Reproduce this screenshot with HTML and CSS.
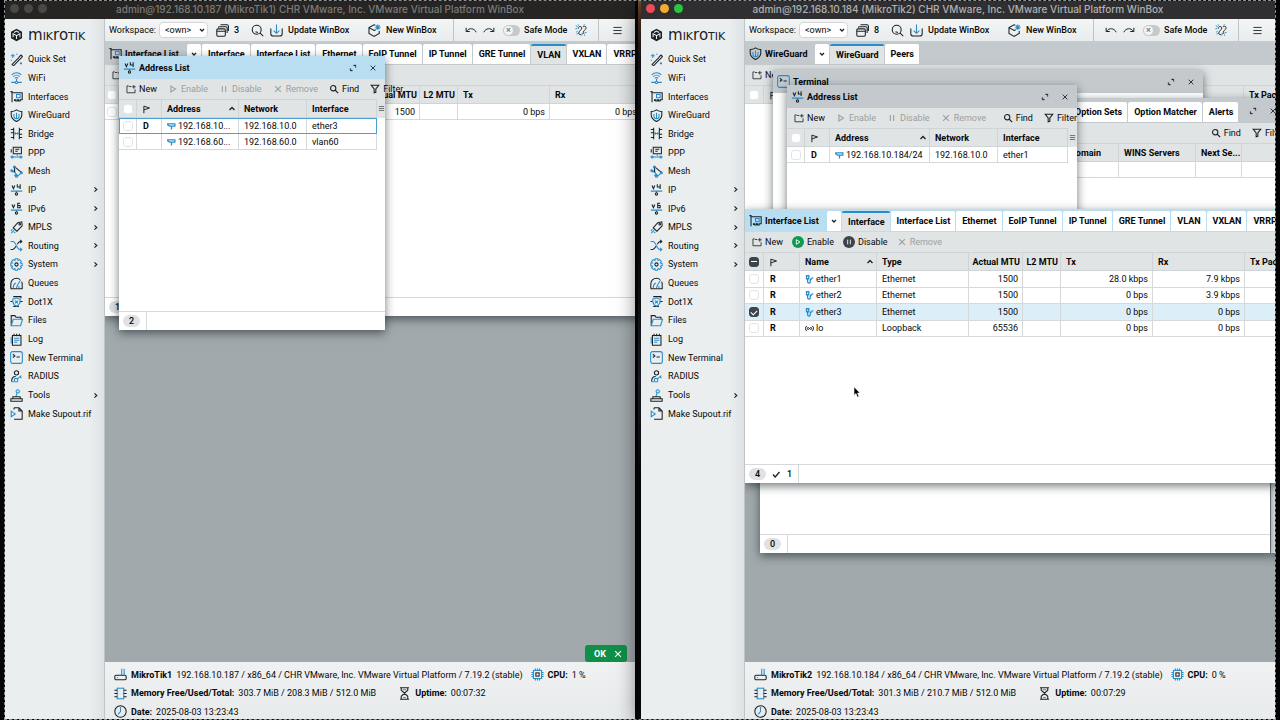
FILE: index.html
```html
<!DOCTYPE html>
<html lang="en">
<head>
<meta charset="utf-8">
<title>WinBox</title>
<link rel="stylesheet" href="styles.css">
</head>
<body>
<svg class="defs" aria-hidden="true">
  <symbol id="i-logo" viewBox="0 0 16 16"><path class="solid" d="M8 .3l6.8 3.8v7.8L8 15.7 1.200 11.900V4.100z"/><path class="cut" d="M3.800 10.800V6.300L8 8.800l4.200-2.500v4.500M5 4.900l3-1.700 3 1.700M8 9v4"/></symbol>
  <symbol id="i-wand" viewBox="0 0 16 16"><path class="d" d="M2 14.500l9.500-9.500M4.500 15.500L14.500 5.500M11 5l2.500-2.500 1.700 1.700-1 1.500M2 14l2.500 1.500"/><path class="b" d="M3.500 1v5M1 3.500h5M13.500 11.500v2.500M12.200 12.800h2.600M8.500 1v1.500M1 9h1.500"/></symbol>
  <symbol id="i-wifi" viewBox="0 0 16 16"><path class="b" d="M2 4.800c3.500-3.500 8.500-3.500 12 0M4 7c2.300-2.300 5.700-2.300 8 0M6 9c1.300-1.200 2.700-1.200 4 0M8 9.500V13M1.500 14h5M9.500 14h5"/><circle class="b" cx="8" cy="14" r="1.300"/></symbol>
  <symbol id="i-iface" viewBox="0 0 16 16"><path class="d" d="M.5 2h2v13M2.500 3.500h12.500v8.500h-2.500v1.500h-2V12h-1.500v1.500h-2V12H5.500v1.500"/><rect class="b" x="8" y="5.500" width="4.500" height="4"/></symbol>
  <symbol id="i-shield" viewBox="0 0 16 16"><path class="d" d="M8 1c2 1.500 4 2 6.500 2v4.500c0 4-2.500 6-6.500 8-4-2-6.500-4-6.500-8V3C4 3 6 2.500 8 1z"/><path class="b" d="M8 4.500v8M4.800 6v3c0 2 1.200 3 3.200 3s3.200-1 3.200-3V6"/></symbol>
  <symbol id="i-bridge" viewBox="0 0 16 16"><path class="d" d="M4.500 1v14M11.500 1v14M1 3h3.500M1 7h3.500M1 13h3.500M11.500 3H15M11.500 9H15M11.500 13H15"/><path class="b" d="M4.500 8h7M6.500 6.500v3M9.500 6.500v3"/></symbol>
  <symbol id="i-ppp" viewBox="0 0 16 16"><path class="d" d="M4 1.500h10v8H4zM6.500 4h5M6.500 6.500h3M1.500 4v4"/><path class="b" d="M9 9.500V12M3 13.500h10"/><circle class="b" cx="2.500" cy="13.500" r="1.300"/><circle class="b" cx="13.500" cy="13.500" r="1.300"/></symbol>
  <symbol id="i-mesh" viewBox="0 0 16 16"><path class="b" d="M1.500 6.500l4.500 2 3 5.500 5-4.500M1.500 6.500L4 9M6 8.500L5.500 3M9 14l-4-2"/><path class="d" d="M5.500 2l8.500 7M5.500 2v7"/><circle class="b" cx="5.500" cy="2.500" r="1.200"/><circle class="b" cx="14" cy="9.500" r="1.200"/><circle class="b" cx="8" cy="13.500" r="1.500"/><circle class="b" cx="2" cy="7" r="1"/></symbol>
  <symbol id="i-v4" viewBox="0 0 16 16"><path class="d" d="M2.500 3l1.700 4 1.700-4M9 1.500V5h4M12.500 1.500V7.500"/><path class="b" d="M1 10h14M8 10v2"/><circle class="d" cx="8" cy="13.500" r="1.400"/></symbol>
  <symbol id="i-v6" viewBox="0 0 16 16"><path class="d" d="M2.500 3l1.700 4 1.700-4M12.500 1.500H9.500V7h3V4.300h-3"/><path class="b" d="M1 10h14M8 10v2"/><circle class="d" cx="8" cy="13.500" r="1.400"/></symbol>
  <symbol id="i-tag" viewBox="0 0 16 16"><path class="d" d="M4 8.500L9.500 2 14.500 1l.5 5-6.500 6.500z"/><circle class="d" cx="12" cy="4" r="1"/><path class="b" d="M1 12l2-1.500M1.500 15l3.500-3.500M5 15l1.500-1.500"/></symbol>
  <symbol id="i-route" viewBox="0 0 16 16"><path class="b" d="M.8 3h2.500c4.500 0 4.500 10 9 10h2M12.500 11l2 2-2 2"/><path class="d" d="M.8 13h2.500c2 0 3-2 4-4M9 6.500C10 4.500 11 3 12.500 3h2M12.500 1l2 2-2 2"/></symbol>
  <symbol id="i-gear" viewBox="0 0 16 16"><path class="b" d="M6.500 1h3l.4 2 1.800-1 2.200 2.200-1.100 1.900 2.200.5v2.900l-2.100.5 1 1.900-2.200 2.100-1.800-1-.5 2h-3L6 13l-1.900 1L2 11.900 3.100 10 1 9.500v-3L3.100 6 2 4.200 4.100 2 6 3.100z"/><circle class="d" cx="8" cy="8" r="2"/></symbol>
  <symbol id="i-gauge" viewBox="0 0 16 16"><path class="d" d="M1 14.500V8.500C1 4.500 4 1.500 8 1.500c2 0 3.500.7 4.500 1.800M1 14.500h14V8.500c0-1-.2-2-.6-2.800"/><path class="b" d="M4 13.500c0-3 1-5 3-6M8.500 11L13 4M8 13.500l1-3M11 13.500V11"/></symbol>
  <symbol id="i-dot1x" viewBox="0 0 16 16"><path class="d" d="M4 2h9.500v2M4 14h7M12 8h3.500M.5 8H3"/><path class="b" d="M8 3.500c1.500 1 3 1.500 4.500 1.500v3c0 3-2 4.500-4.500 6-2.500-1.500-4.500-3-4.500-6V5C5 5 6.500 4.500 8 3.500zM6.200 6.800l3.600 3.500M9.800 6.800L6.200 10.300"/></symbol>
  <symbol id="i-files" viewBox="0 0 16 16"><path class="d" d="M1.500 14V2H6l1.500 2h6v2.500"/><path class="b" d="M1.500 14.500l2.500-8h11.500l-2.500 8z"/></symbol>
  <symbol id="i-log" viewBox="0 0 16 16"><path class="d" d="M3 3h10.500v12H3zM5 1v3M8.200 1v3M11.500 1v3"/><path class="b" d="M5 6.500h6.500M5 9h6.500M5 11.500h4M1.500 5v8"/></symbol>
  <symbol id="i-term" viewBox="0 0 16 16"><rect class="b" x=".8" y=".8" width="14.400" height="14.400" rx="2.500"/><path class="d" d="M3.500 4l2.500 2-2.500 2M8 7.500h4"/></symbol>
  <symbol id="i-radius" viewBox="0 0 16 16"><circle class="d" cx="8" cy="3.500" r="2.600"/><path class="d" d="M2 14c0-4 2-6 5-6"/><circle class="b" cx="7.500" cy="12.500" r="2.200"/><path class="b" d="M9 11l5-4M12.500 8l1.500 2M2 14.500h3"/></symbol>
  <symbol id="i-tools" viewBox="0 0 16 16"><circle class="b" cx="9.500" cy="3" r="2"/><path class="b" d="M8.800 5L7 10"/><path class="d" d="M1 12h14v3H1zM3.500 12V9.500h9V12"/></symbol>
  <symbol id="i-supout" viewBox="0 0 16 16"><path class="d" d="M5 1h6l4 4v10H5M11 1v4h4M5 1v2"/><path class="b" d="M1.500 5l5 3.500-5 3.500z"/></symbol>
  <symbol id="i-chev" viewBox="0 0 8 8"><path class="d" d="M2.800 1.500L5.500 4 2.800 6.500"/></symbol>
  <symbol id="i-down" viewBox="0 0 8 8"><path class="d" d="M2 3l2 2 2-2"/></symbol>
  <symbol id="i-up" viewBox="0 0 8 8"><path class="d" d="M1.500 5L4 2.500 6.500 5"/></symbol>
  <symbol id="i-stack" viewBox="0 0 16 16"><rect class="d" x="1" y="6" width="10.500" height="9" rx="1.500"/><path class="d" d="M1 9h10.500M3 4.500C3 3.700 3.500 3.500 4 3.500h8c1 0 1.700.7 1.700 1.700V11M5.500 1h8c1 0 1.800.8 1.800 1.800V8.500"/></symbol>
  <symbol id="i-search" viewBox="0 0 16 16"><circle class="d" cx="7" cy="7" r="5.500"/><path class="d" d="M11 11l4 4M5.500 9.500l3 1"/></symbol>
  <symbol id="i-update" viewBox="0 0 16 16"><path class="d" d="M1 5.500V12c0 1.800 1 2.800 2.800 2.800h8.400c1.800 0 2.800-1 2.800-2.800V5.500"/><path class="b" d="M8 .5v11M4.500 8.200L8 11.500l3.500-3.300"/></symbol>
  <symbol id="i-box" viewBox="0 0 16 16"><path class="d" d="M9 1.500L7.500 1 1.200 4.500v7l6.300 3.700 6.300-3.700V8.500M1.200 4.500L7.500 8l2-1"/><path class="b" d="M12 .5v7M8.800 4h6.500M9.800 1.800l4.500 4.500M14.300 1.800L9.800 6.300"/></symbol>
  <symbol id="i-undo" viewBox="0 0 16 16"><path class="d" d="M1.500 5v5h5M2 9.500C5.500 5 12 5 15 11"/></symbol>
  <symbol id="i-redo" viewBox="0 0 16 16"><path class="d" d="M14.500 5v5h-5M14 9.500C10.500 5 4 5 1 11"/></symbol>
  <symbol id="i-link" viewBox="0 0 16 16"><path class="d" d="M4.500 6C4.500 2.500 9 2.500 9 5.500c0 2-4 4-4 6.500 0 2 1.500 2.500 3 2M10.500 4c2.500-2 5-.5 4 2-.8 2-3.500 3-3.500 5.500 0 1 .5 1.500 1.500 1.500"/><path class="b" d="M1 2.500l2.500 1M4 .5l.8 1.800M.5 6.500L3 6M9.500 12l-.5 3.500M12 14.500l1.500 1M13 11l2.500.5M1.500 11l2-1.500M2.500 14l1.500-2M12.500.5L11.500 2"/></symbol>
  <symbol id="i-menu" viewBox="0 0 16 16"><path class="d" d="M2 3.500h12M2 8h12M2 12.500h12"/></symbol>
  <symbol id="i-new" viewBox="0 0 16 16"><path class="d" d="M8.500 4H5L4 3H1.500v11h13V8.500M12.500 1.500v6M9.500 4.500h6"/></symbol>
  <symbol id="i-play" viewBox="0 0 12 12"><path class="d" d="M3.500 2.500L9 6 3.500 9.500z"/></symbol>
  <symbol id="i-pause" viewBox="0 0 12 12"><path class="d" d="M4 2.500v7M8 2.500v7"/></symbol>
  <symbol id="i-x" viewBox="0 0 12 12"><path class="d" d="M2.500 2.500l7 7M9.500 2.500l-7 7"/></symbol>
  <symbol id="i-find" viewBox="0 0 12 12"><circle class="d" cx="5" cy="5" r="3.200"/><path class="d" d="M7.500 7.500l3.500 3.500"/></symbol>
  <symbol id="i-filter" viewBox="0 0 12 12"><path class="d" d="M1.500 1.500h9L7 6v4L5 10.500V6z"/></symbol>
  <symbol id="i-max" viewBox="0 0 12 12"><path class="d" d="M6.500 2H10v3.500M5.500 10H2V6.500M7.500 2.500L10 2M2.500 9L4.500 9.800"/></symbol>
  <symbol id="i-flag" viewBox="0 0 12 12"><path class="d" d="M2.500 11V1.500L10 4 2.500 6.500"/></symbol>
  <symbol id="i-addr" viewBox="0 0 12 12"><path class="b" d="M1 2.500h9.500v3H3.500L1 4zM6 5.500V10"/></symbol>
  <symbol id="i-eth" viewBox="0 0 12 12"><path class="b" d="M2 1h3v4H2zM3.500 5v4c0 2.500 3.500 2.500 3.500 0V7c0-1.500 1-2 2.500-2M9 3.800h2"/></symbol>
  <symbol id="i-loop" viewBox="0 0 12 12"><path class="d" d="M2.500 2.500C0 4 0 8 2.500 9.500M9.500 2.500c2.500 1.500 2.500 5.500 0 7M6 6C4.500 4 3 4.500 3 6s1.500 2 3 0 3-1.500 3 0-1.500 2-3 0"/></symbol>
  <symbol id="i-router" viewBox="0 0 16 16"><rect class="d" x="1" y="9" width="14" height="5.500" rx="1.500"/><path class="b" d="M9.500 9V1M12.500 9V1M3.500 12h1.500"/></symbol>
  <symbol id="i-mem" viewBox="0 0 16 16"><rect class="b" x="4" y="1.500" width="8" height="13"/><path class="d" d="M.5 4H4M.5 8H4M.5 12H4M12 4h3.500M12 8h3.500M12 12h3.500"/></symbol>
  <symbol id="i-clock" viewBox="0 0 16 16"><circle class="d" cx="8" cy="8" r="7"/><path class="b" d="M8 2.500V8l-3 3.500"/></symbol>
  <symbol id="i-cpu" viewBox="0 0 16 16"><rect class="b" x="3" y="3" width="10" height="10"/><path class="b" d="M5.500 3V.5M8 3V.5M10.500 3V.5M5.500 15.500V13M8 15.500V13M10.500 15.500V13M3 5.500H.5M3 8H.5M3 10.500H.5M15.500 5.500H13M15.500 8H13M15.500 10.500H13"/><rect class="d" x="6" y="6" width="4" height="4"/></symbol>
  <symbol id="i-glass" viewBox="0 0 16 16"><path class="d" d="M2.500 1h11M2.500 15h11M4 1v3l8 7.500V15M12 1v3L4 11.500V15"/><path class="b" d="M6 3.500h4M6.500 13h3"/></symbol>
</svg>

<div class="screen">
  <section class="app app-back">
    <header class="titlebar"><span class="lights"><i></i><i></i><i></i></span><h1>admin@192.168.10.187 (MikroTik1) CHR VMware, Inc. VMware Virtual Platform WinBox</h1></header>
    <div class="body">
      <aside class="sidebar">
        <div class="brand"><svg><use href="#i-logo"/></svg><span>m<b>ik</b>ro<b>tik</b></span></div>
        <nav>
          <a href="#"><svg><use href="#i-wand"/></svg>Quick Set</a>
          <a href="#"><svg><use href="#i-wifi"/></svg>WiFi</a>
          <a href="#"><svg><use href="#i-iface"/></svg>Interfaces</a>
          <a href="#"><svg><use href="#i-shield"/></svg>WireGuard</a>
          <a href="#"><svg><use href="#i-bridge"/></svg>Bridge</a>
          <a href="#"><svg><use href="#i-ppp"/></svg>PPP</a>
          <a href="#"><svg><use href="#i-mesh"/></svg>Mesh</a>
          <a href="#"><svg><use href="#i-v4"/></svg>IP<svg class="more"><use href="#i-chev"/></svg></a>
          <a href="#"><svg><use href="#i-v6"/></svg>IPv6<svg class="more"><use href="#i-chev"/></svg></a>
          <a href="#"><svg><use href="#i-tag"/></svg>MPLS<svg class="more"><use href="#i-chev"/></svg></a>
          <a href="#"><svg><use href="#i-route"/></svg>Routing<svg class="more"><use href="#i-chev"/></svg></a>
          <a href="#"><svg><use href="#i-gear"/></svg>System<svg class="more"><use href="#i-chev"/></svg></a>
          <a href="#"><svg><use href="#i-gauge"/></svg>Queues</a>
          <a href="#"><svg><use href="#i-dot1x"/></svg>Dot1X</a>
          <a href="#"><svg><use href="#i-files"/></svg>Files</a>
          <a href="#"><svg><use href="#i-log"/></svg>Log</a>
          <a href="#"><svg><use href="#i-term"/></svg>New Terminal</a>
          <a href="#"><svg><use href="#i-radius"/></svg>RADIUS</a>
          <a href="#"><svg><use href="#i-tools"/></svg>Tools<svg class="more"><use href="#i-chev"/></svg></a>
          <a href="#"><svg><use href="#i-supout"/></svg>Make Supout.rif</a>
        </nav>
      </aside>
      <div class="main">
        <div class="topbar">
          <label class="workspace">Workspace: <span class="pick"><select><option>&lt;own&gt;</option></select><svg><use href="#i-down"/></svg></span></label>
          <button class="windows"><svg><use href="#i-stack"/></svg>3</button>
          <button class="lookup" aria-label="Search"><svg><use href="#i-search"/></svg></button>
          <button class="update"><svg><use href="#i-update"/></svg>Update WinBox</button>
          <button class="fresh"><svg><use href="#i-box"/></svg>New WinBox</button>
          <div class="safe">
            <button aria-label="Undo"><svg><use href="#i-undo"/></svg></button>
            <button aria-label="Redo"><svg><use href="#i-redo"/></svg></button>
            <label><input type="checkbox" class="toggle">Safe Mode</label>
            <button aria-label="Connection"><svg><use href="#i-link"/></svg></button>
          </div>
          <button class="burger" aria-label="Menu"><svg><use href="#i-menu"/></svg></button>
        </div>
        <div class="desktop">
          <section class="win w-list-back">
            <div class="head"><h2><svg><use href="#i-iface"/></svg>Interface List</h2>
              <div class="tabs"><button class="drop" aria-label="All tabs"><svg><use href="#i-down"/></svg></button><button>Interface</button><button>Interface List</button><button>Ethernet</button><button>EoIP Tunnel</button><button>IP Tunnel</button><button>GRE Tunnel</button><button class="on">VLAN</button><button>VXLAN</button><button>VRRP</button></div></div>
            <div class="tools"><button><svg><use href="#i-new"/></svg>New</button></div>
            <table>
              <colgroup><col class="c14"><col class="c36"><col class="c77"><col class="c134"><col class="c54"><col class="c38"><col class="c92"><col class="c92"></colgroup>
              <thead><tr><th class="ck"><input type="checkbox" aria-label="Select all"></th><th></th><th></th><th></th><th class="n">Actual MTU</th><th class="n">L2 MTU</th><th>Tx</th><th>Rx</th></tr></thead>
              <tbody><tr><td class="ck"><input type="checkbox" aria-label="Select row"></td><td></td><td></td><td></td><td class="n">1500</td><td></td><td class="n">0 bps</td><td class="n">0 bps</td></tr></tbody>
            </table>
            <footer><span class="badge">1</span></footer>
          </section>

          <section class="win focus w-addr-back">
            <div class="head"><h2><svg><use href="#i-v4"/></svg>Address List</h2><button class="wb" aria-label="Maximize"><svg><use href="#i-max"/></svg></button><button class="wb" aria-label="Close"><svg><use href="#i-x"/></svg></button></div>
            <div class="tools"><button><svg><use href="#i-new"/></svg>New</button><button disabled><svg><use href="#i-play"/></svg>Enable</button><button disabled><svg><use href="#i-pause"/></svg>Disable</button><button disabled><svg><use href="#i-x"/></svg>Remove</button><button class="find"><svg><use href="#i-find"/></svg>Find</button><button><svg><use href="#i-filter"/></svg>Filter</button></div>
            <div class="grid">
              <table>
                <colgroup><col class="c18"><col class="c25"><col class="c77"><col class="c68"><col class="c70"></colgroup>
                <thead><tr><th class="ck"><input type="checkbox" aria-label="Select all"></th><th class="fl"><svg><use href="#i-flag"/></svg></th><th class="sort">Address<svg><use href="#i-up"/></svg></th><th>Network</th><th>Interface</th></tr></thead>
                <tbody>
                  <tr class="cursor"><td class="ck"><input type="checkbox" aria-label="Select ether3"></td><td class="fl">D</td><td><svg><use href="#i-addr"/></svg>192.168.10...</td><td>192.168.10.0</td><td>ether3</td></tr>
                  <tr><td class="ck"><input type="checkbox" aria-label="Select vlan60"></td><td></td><td><svg><use href="#i-addr"/></svg>192.168.60...</td><td>192.168.60.0</td><td>vlan60</td></tr>
                </tbody>
              </table>
              <button class="cols" aria-label="Columns"><svg><use href="#i-menu"/></svg></button>
            </div>
            <footer><span class="badge">2</span></footer>
          </section>
          <div class="toast">OK<button aria-label="Dismiss"><svg><use href="#i-x"/></svg></button></div>
        </div>
        <footer class="status">
          <p><svg><use href="#i-router"/></svg><b>MikroTik1</b><span>192.168.10.187 / x86_64 / CHR VMware, Inc. VMware Virtual Platform / 7.19.2 (stable)</span><svg class="second"><use href="#i-cpu"/></svg><b>CPU:</b><span>1 %</span></p>
          <p><svg><use href="#i-mem"/></svg><b>Memory Free/Used/Total:</b><span>303.7 MiB / 208.3 MiB / 512.0 MiB</span><svg class="third"><use href="#i-glass"/></svg><b>Uptime:</b><span>00:07:32</span></p>
          <p><svg><use href="#i-clock"/></svg><b>Date:</b><span>2025-08-03 13:23:43</span></p>
        </footer>
      </div>
    </div>
  </section>

  <section class="app app-front">
    <header class="titlebar"><span class="lights"><i></i><i></i><i></i></span><h1>admin@192.168.10.184 (MikroTik2) CHR VMware, Inc. VMware Virtual Platform WinBox</h1></header>
    <div class="body">
      <aside class="sidebar">
        <div class="brand"><svg><use href="#i-logo"/></svg><span>m<b>ik</b>ro<b>tik</b></span></div>
        <nav>
          <a href="#"><svg><use href="#i-wand"/></svg>Quick Set</a>
          <a href="#"><svg><use href="#i-wifi"/></svg>WiFi</a>
          <a href="#"><svg><use href="#i-iface"/></svg>Interfaces</a>
          <a href="#"><svg><use href="#i-shield"/></svg>WireGuard</a>
          <a href="#"><svg><use href="#i-bridge"/></svg>Bridge</a>
          <a href="#"><svg><use href="#i-ppp"/></svg>PPP</a>
          <a href="#"><svg><use href="#i-mesh"/></svg>Mesh</a>
          <a href="#"><svg><use href="#i-v4"/></svg>IP<svg class="more"><use href="#i-chev"/></svg></a>
          <a href="#"><svg><use href="#i-v6"/></svg>IPv6<svg class="more"><use href="#i-chev"/></svg></a>
          <a href="#"><svg><use href="#i-tag"/></svg>MPLS<svg class="more"><use href="#i-chev"/></svg></a>
          <a href="#"><svg><use href="#i-route"/></svg>Routing<svg class="more"><use href="#i-chev"/></svg></a>
          <a href="#"><svg><use href="#i-gear"/></svg>System<svg class="more"><use href="#i-chev"/></svg></a>
          <a href="#"><svg><use href="#i-gauge"/></svg>Queues</a>
          <a href="#"><svg><use href="#i-dot1x"/></svg>Dot1X</a>
          <a href="#"><svg><use href="#i-files"/></svg>Files</a>
          <a href="#"><svg><use href="#i-log"/></svg>Log</a>
          <a href="#"><svg><use href="#i-term"/></svg>New Terminal</a>
          <a href="#"><svg><use href="#i-radius"/></svg>RADIUS</a>
          <a href="#"><svg><use href="#i-tools"/></svg>Tools<svg class="more"><use href="#i-chev"/></svg></a>
          <a href="#"><svg><use href="#i-supout"/></svg>Make Supout.rif</a>
        </nav>
      </aside>
      <div class="main">
        <div class="topbar">
          <label class="workspace">Workspace: <span class="pick"><select><option>&lt;own&gt;</option></select><svg><use href="#i-down"/></svg></span></label>
          <button class="windows"><svg><use href="#i-stack"/></svg>8</button>
          <button class="lookup" aria-label="Search"><svg><use href="#i-search"/></svg></button>
          <button class="update"><svg><use href="#i-update"/></svg>Update WinBox</button>
          <button class="fresh"><svg><use href="#i-box"/></svg>New WinBox</button>
          <div class="safe">
            <button aria-label="Undo"><svg><use href="#i-undo"/></svg></button>
            <button aria-label="Redo"><svg><use href="#i-redo"/></svg></button>
            <label><input type="checkbox" class="toggle">Safe Mode</label>
            <button aria-label="Connection"><svg><use href="#i-link"/></svg></button>
          </div>
          <button class="burger" aria-label="Menu"><svg><use href="#i-menu"/></svg></button>
        </div>
        <div class="desktop">
          <section class="win w-edge"></section>
          <section class="win w-zero"><footer><span class="badge">0</span></footer></section>

          <section class="win w-wg">
            <div class="head"><h2><svg><use href="#i-shield"/></svg>WireGuard</h2>
              <div class="tabs"><button class="drop" aria-label="All tabs"><svg><use href="#i-down"/></svg></button><button class="on">WireGuard</button><button>Peers</button></div></div>
            <div class="tools"><button><svg><use href="#i-new"/></svg>New</button></div>
            <table>
              <colgroup><col class="c19"><col><col class="c54"></colgroup>
              <thead><tr><th class="ck"><input type="checkbox" aria-label="Select all"></th><th class="fl"><svg><use href="#i-flag"/></svg></th><th>Tx Packet</th></tr></thead>
            </table>
          </section>

          <section class="win w-term">
            <div class="head"><h2><svg><use href="#i-term"/></svg>Terminal</h2><button class="wb" aria-label="Maximize"><svg><use href="#i-max"/></svg></button><button class="wb" aria-label="Close"><svg><use href="#i-x"/></svg></button></div>
          </section>

          <section class="win w-dhcp">
            <div class="head"><div class="tabs"><button>Option Sets</button><button>Option Matcher</button><button>Alerts</button></div><button class="wb" aria-label="Maximize"><svg><use href="#i-max"/></svg></button><button class="wb" aria-label="Close"><svg><use href="#i-x"/></svg></button></div>
            <div class="tools"><button class="find"><svg><use href="#i-find"/></svg>Find</button><button><svg><use href="#i-filter"/></svg>Filter</button></div>
            <table>
              <colgroup><col class="c54"><col class="c77"><col class="c46"><col></colgroup>
              <thead><tr><th>Domain</th><th>WINS Servers</th><th>Next Se...</th><th></th></tr></thead>
              <tbody><tr><td></td><td></td><td></td><td></td></tr></tbody>
            </table>
          </section>

          <section class="win w-addr">
            <div class="head"><h2><svg><use href="#i-v4"/></svg>Address List</h2><button class="wb" aria-label="Maximize"><svg><use href="#i-max"/></svg></button><button class="wb" aria-label="Close"><svg><use href="#i-x"/></svg></button></div>
            <div class="tools"><button><svg><use href="#i-new"/></svg>New</button><button disabled><svg><use href="#i-play"/></svg>Enable</button><button disabled><svg><use href="#i-pause"/></svg>Disable</button><button disabled><svg><use href="#i-x"/></svg>Remove</button><button class="find"><svg><use href="#i-find"/></svg>Find</button><button><svg><use href="#i-filter"/></svg>Filter</button></div>
            <div class="grid">
              <table>
                <colgroup><col class="c18"><col class="c25"><col class="c100"><col class="c68"><col class="c70"></colgroup>
                <thead><tr><th class="ck"><input type="checkbox" aria-label="Select all"></th><th class="fl"><svg><use href="#i-flag"/></svg></th><th class="sort">Address<svg><use href="#i-up"/></svg></th><th>Network</th><th>Interface</th></tr></thead>
                <tbody><tr><td class="ck"><input type="checkbox" aria-label="Select ether1"></td><td class="fl">D</td><td><svg><use href="#i-addr"/></svg>192.168.10.184/24</td><td>192.168.10.0</td><td>ether1</td></tr></tbody>
              </table>
              <button class="cols" aria-label="Columns"><svg><use href="#i-menu"/></svg></button>
            </div>
          </section>

          <section class="win focus w-list">
            <div class="head"><h2><svg><use href="#i-iface"/></svg>Interface List</h2>
              <div class="tabs"><button class="drop" aria-label="All tabs"><svg><use href="#i-down"/></svg></button><button class="on">Interface</button><button>Interface List</button><button>Ethernet</button><button>EoIP Tunnel</button><button>IP Tunnel</button><button>GRE Tunnel</button><button>VLAN</button><button>VXLAN</button><button>VRRP</button></div></div>
            <div class="tools live"><button><svg><use href="#i-new"/></svg>New</button><button><svg class="disc go"><use href="#i-play"/></svg>Enable</button><button><svg class="disc"><use href="#i-pause"/></svg>Disable</button><button disabled><svg><use href="#i-x"/></svg>Remove</button></div>
            <table>
              <colgroup><col class="c19"><col class="c36"><col class="c77"><col class="c92"><col class="c54"><col class="c38"><col class="c92"><col class="c92"><col class="c54"></colgroup>
              <thead><tr><th class="ck"><input type="checkbox" class="mixed" checked aria-label="Select all"></th><th class="fl"><svg><use href="#i-flag"/></svg></th><th class="sort">Name<svg><use href="#i-up"/></svg></th><th>Type</th><th class="n">Actual MTU</th><th class="n">L2 MTU</th><th>Tx</th><th>Rx</th><th>Tx Packet</th></tr></thead>
              <tbody>
                <tr><td class="ck"><input type="checkbox" aria-label="Select ether1"></td><td class="fl">R</td><td><svg><use href="#i-eth"/></svg>ether1</td><td>Ethernet</td><td class="n">1500</td><td></td><td class="n">28.0 kbps</td><td class="n">7.9 kbps</td><td></td></tr>
                <tr><td class="ck"><input type="checkbox" aria-label="Select ether2"></td><td class="fl">R</td><td><svg><use href="#i-eth"/></svg>ether2</td><td>Ethernet</td><td class="n">1500</td><td></td><td class="n">0 bps</td><td class="n">3.9 kbps</td><td></td></tr>
                <tr class="picked"><td class="ck"><input type="checkbox" checked aria-label="Select ether3"></td><td class="fl">R</td><td><svg><use href="#i-eth"/></svg>ether3</td><td>Ethernet</td><td class="n">1500</td><td></td><td class="n">0 bps</td><td class="n">0 bps</td><td></td></tr>
                <tr><td class="ck"><input type="checkbox" aria-label="Select lo"></td><td class="fl">R</td><td><svg><use href="#i-loop"/></svg>lo</td><td>Loopback</td><td class="n">65536</td><td></td><td class="n">0 bps</td><td class="n">0 bps</td><td></td></tr>
              </tbody>
            </table>
            <footer><span class="badge">4</span><svg><path class="d" d="M1 4.500l2.200 2.500L7.500 2"/></svg>1</footer>
          </section>
          <svg class="pointer" viewBox="0 0 8 12"><path d="M1 .8v8.500l2-1.700 1.500 3.600 1.500-.7-1.500-3.400H7z"/></svg>
        </div>
        <footer class="status">
          <p><svg><use href="#i-router"/></svg><b>MikroTik2</b><span>192.168.10.184 / x86_64 / CHR VMware, Inc. VMware Virtual Platform / 7.19.2 (stable)</span><svg class="second"><use href="#i-cpu"/></svg><b>CPU:</b><span>0 %</span></p>
          <p><svg><use href="#i-mem"/></svg><b>Memory Free/Used/Total:</b><span>301.3 MiB / 210.7 MiB / 512.0 MiB</span><svg class="third"><use href="#i-glass"/></svg><b>Uptime:</b><span>00:07:29</span></p>
          <p><svg><use href="#i-clock"/></svg><b>Date:</b><span>2025-08-03 13:23:43</span></p>
        </footer>
      </div>
    </div>
  </section>
</div>
</body>
</html>
```

FILE: styles.css
```css
* { box-sizing: border-box; }
:root {
  --ink: #1b2125;
  --blue: #258dcd;
  --line: #d5d9db;
  --bar: #e1e4e5;
}
body {
  margin: 0;
  background: #060606;
  color: #060708;
  font: 500 9px/12px Roboto, "Liberation Sans", sans-serif;
}
.defs { position: absolute; width: 0; height: 0; }
h1, h2, p { margin: 0; font-size: inherit; }
button, select, input { font: inherit; color: inherit; margin: 0; }
button { display: inline-flex; align-items: center; border: 0; padding: 0; background: none; white-space: nowrap; }
svg { flex: none; width: 13px; height: 13px; overflow: visible; }
.d, .b, .cut { fill: none; stroke: var(--ink); stroke-width: 1.3; }
.b { stroke: var(--blue); }
#i-addr .b, #i-eth .b { stroke-width: 1.7; }
.solid { fill: var(--ink); }
.cut { stroke: #eceff0; }
b { font-weight: 700; }

.screen {
  position: relative;
  display: grid;
  grid-template-columns: 630fr 634fr;
  gap: 6px;
  height: 100vh;
  padding: 1px 5px;
  overflow: hidden;
  background: linear-gradient(#77502e 0, #5d3b26 20px, #1c1720 60px, #0c0b10 240px, #2a2838 380px, #08080a 480px, #0a090d) 638px 0 / 3px 100% no-repeat;
}
.screen::after {
  content: "";
  position: absolute;
  inset: 0 4px;
  border: 1px dashed #8b8f91;
  pointer-events: none;
}
.app { display: flex; flex-direction: column; min-width: 0; min-height: 0; }
.app-front { position: relative; box-shadow: 0 6px 22px rgba(0, 0, 0, .75); }
.titlebar { position: relative; display: flex; align-items: center; justify-content: center; height: 18px; padding-bottom: 3px; background: #262523; color: #7c7b79; }
.titlebar h1 { font: 500 10px/14px Inter, sans-serif; white-space: nowrap; }
.lights { position: absolute; left: 5px; top: 3px; display: flex; gap: 5px; }
.lights i { width: 9px; height: 9px; border-radius: 50%; background: #4a4845; }
.app-front .titlebar { background: #2f2f31; color: #b0b0b1; }
.app-front .lights i { background: #ec4b58; }
.app-front .lights i:nth-child(2) { background: #f4ac2c; }
.app-front .lights i:nth-child(3) { background: #2bc440; }

.body { display: flex; flex: 1; min-height: 0; background: #ebeef0; }
.sidebar { width: 99px; padding: 6px 5px 0; background: linear-gradient(90deg, #ebeeef 85%, #dfe2e4); }
.app-front .sidebar { width: 103px; padding-left: 9px; }
.brand { display: flex; align-items: center; gap: 5px; height: 19px; margin-bottom: 6px; }
.brand svg { width: 13px; height: 14px; }
.brand span { font: 400 15px/16px "DejaVu Sans", sans-serif; color: var(--ink); }
.brand b { font-weight: 400; font-variant: all-small-caps; }
nav { display: grid; grid-template-rows: repeat(20, 1fr); height: 373px; }
nav a { display: flex; align-items: center; gap: 5px; color: inherit; text-decoration: none; white-space: nowrap; font-weight: 400; }
nav .more { width: 7px; height: 7px; margin-left: auto; }

.main { display: flex; flex-direction: column; flex: 1; min-width: 0; border-left: 1px solid #bfc4c7; }
.topbar { display: flex; align-items: center; height: 23px; padding-left: 4px; border-bottom: 1px solid #c6cbcd; background: linear-gradient(#f3f5f5, #e9eced); overflow: hidden; }
.topbar button svg { margin-right: 5px; }
.workspace { display: flex; align-items: center; justify-content: space-between; width: 99px; font-weight: 400; }
.pick { position: relative; display: flex; }
.pick select { width: 49px; height: 16px; padding: 0 5px; appearance: none; border: 1px solid #d3d7d9; border-radius: 4px; background: #fff; }
.pick svg { position: absolute; right: 2px; top: 4px; width: 8px; height: 8px; }
.windows { width: 35px; margin-left: 8px; font-weight: 500; }
.lookup { width: 19px; }
.topbar .update { width: 98px; }
.topbar .fresh { width: 85px; }
.safe { display: flex; align-items: center; gap: 6px; width: 146px; height: 22px; padding-left: 11px; border: solid #bfc4c6; border-width: 0 1px; }
.safe svg { width: 12px; height: 12px; }
.safe button svg { margin: 0; }
.safe label { display: flex; align-items: center; gap: 4px; width: 66px; margin-left: 2px; white-space: nowrap; }
.toggle { appearance: none; display: flex; flex: none; width: 17px; height: 11px; padding: 1px; border-radius: 6px; background: #c5c9cb; }
.toggle::before { content: "×"; width: 9px; height: 9px; border-radius: 50%; background: #f4f5f5; color: #777; line-height: 9px; text-align: center; }
.burger { margin-left: 13px; }
.burger svg { width: 11px; height: 11px; }

.desktop { position: relative; flex: 1; min-height: 0; overflow: hidden; background: #a1a9ac; }
.win { position: absolute; display: flex; flex-direction: column; background: #fff; box-shadow: 0 3px 9px rgba(20, 30, 35, .6); }
.head { display: flex; align-items: center; height: 23px; padding-left: 4px; background: #c3c9cc; }
.head h2 { display: flex; flex: 1; align-items: center; gap: 3px; font-weight: 700; white-space: nowrap; }
.focus .head { background: #b9def2; }
.wb { flex: none; width: 20px; justify-content: center; }
.wb svg { width: 8px; height: 8px; }
.head .wb + .wb { margin-right: 2px; }
.tabs { display: flex; gap: 1px; align-self: flex-end; height: 21px; padding-bottom: 1px; }
.tabs button { padding: 0 5px 0 6px; border-radius: 2px 2px 0 0; background: #fff; font-weight: 700; }
.tabs .on { border-top: 2px solid var(--blue); background: var(--bar); }
.tabs .drop { width: 14px; padding: 0 3px; }
.drop svg { width: 8px; height: 8px; }
.tools { display: flex; align-items: center; gap: 11px; height: 20px; padding-left: 7px; background: var(--bar); }
.tools button { flex: none; gap: 3px; font-weight: 400; }
.tools svg { width: 10px; height: 10px; }
.tools button:disabled { color: #9a9fa2; }
.tools button:disabled svg { --ink: #9a9fa2; }
.tools .find { margin-left: auto; }
.tools.live { gap: 9px; }
.tools .disc { width: 12px; height: 12px; padding: 2px; border-radius: 50%; background: #3c454b; --ink: #fff; }
.tools .go { background: #0d9c4f; }

table { width: 100%; table-layout: fixed; border-collapse: separate; border-spacing: 0; }
th, td { height: 16px; padding: 0 2px 0 5px; overflow: hidden; border: solid var(--line); border-width: 0 1px 1px 0; font-weight: 400; text-align: left; white-space: nowrap; line-height: 12px; }
th { height: 19px; background: var(--bar); border-color: #cfd4d6; border-top-width: 1px; font-weight: 700; }
.n { padding-right: 4px; text-align: right; }
th.n { padding: 0 2px; }
th svg, td svg { width: 9px; height: 9px; vertical-align: middle; }
td svg { margin-right: 2px; }
.sort svg { float: right; width: 8px; height: 8px; margin-top: 2px; }
.fl { font-weight: 700; }
td.fl { padding-left: 6px; }
th.ck, td.ck { padding: 0; }
.ck input { display: block; appearance: none; width: 10px; height: 10px; margin: 0 auto; border: 1px solid #e3e6e7; border-radius: 3px; background: #fff; }
.ck input:checked { border-color: #3c454b; background: #3c454b; }
.ck input:checked::after { content: ""; display: block; width: 5px; height: 3px; margin: 2px 1px; border: solid #fff; border-width: 0 0 1px 1px; transform: rotate(-45deg); }
.ck .mixed:checked::after { width: 6px; height: 1px; margin: 3px 1px; border: 0; background: #fff; transform: none; }
.picked { background: #dceef8; }
.cursor { outline: 1px solid #4b9fd3; outline-offset: -1px; }
.grid { display: grid; grid-template-columns: 1fr 9px; background: linear-gradient(var(--bar) 19px, #fff 19px); }
.cols { align-self: start; justify-content: center; height: 19px; }
.cols svg { width: 7px; height: 7px; }
.c14 { width: 14px; } .c18 { width: 18px; } .c19 { width: 19px; } .c25 { width: 25px; }
.c36 { width: 36px; } .c38 { width: 38px; } .c46 { width: 46px; } .c54 { width: 54px; }
.c68 { width: 68px; } .c70 { width: 70px; } .c77 { width: 77px; } .c92 { width: 92px; }
.c100 { width: 100px; } .c134 { width: 134px; }

.win footer { display: flex; align-items: center; gap: 6px; height: 19px; margin-top: auto; padding-left: 4px; border-top: 1px solid var(--line); font-weight: 500; }
.win footer::after { content: ""; align-self: stretch; border-left: 1px solid var(--line); }
.badge { width: 17px; border-radius: 6px; background: #dfe1e3; text-align: center; }
.win footer svg { width: 9px; height: 9px; }

.w-list-back { left: 0; top: 0; width: 540px; height: 274px; }
.w-list-back table { width: 537px; }
.w-addr-back { left: 14px; top: 14px; width: 266px; height: 274px; }
.w-addr-back .tools .find { margin-left: 0; }
.w-edge { left: 526px; top: 300px; width: 40px; height: 211px; background: #e3e8e8; }
.w-zero { left: 15px; top: 300px; width: 510px; height: 211px; }
.w-wg { left: 0; top: 0; width: 553px; height: 275px; }
.w-wg .head h2 { flex: 0 0 66px; }
.w-term { left: 28px; top: 28px; width: 430px; height: 200px; }
.w-dhcp { left: 320px; top: 56px; width: 220px; height: 200px; }
.w-dhcp .head { height: 25px; }
.w-dhcp .tabs { margin-right: auto; }
.w-addr { left: 42px; top: 43px; width: 290px; height: 180px; }
.w-list { left: 0; top: 167px; width: 554px; height: 274px; }
.w-list .head h2, .w-list-back .head h2 { flex: 0 0 78px; }
.w-list table { height: 85px; }
.pointer { position: absolute; left: 108px; top: 344px; width: 8px; height: 12px; fill: #000; stroke: #fff; stroke-width: .6; }
.toast { position: absolute; right: 8px; bottom: 0; display: flex; align-items: center; gap: 7px; height: 17px; padding: 0 4px 0 9px; border-radius: 3px; background: #0f9048; color: #fff; font-weight: 700; --ink: #fff; }
.toast svg { width: 10px; height: 10px; }

.status { display: flex; flex-direction: column; justify-content: space-between; height: 57px; padding: 6px 9px 1px; background: linear-gradient(#eff1f2, #e8ebec); }
.status p { display: flex; align-items: center; gap: 4px; height: 13px; white-space: nowrap; }
.status b { font-weight: 700; }
.status span { font-weight: 400; }
.status .second { margin-left: 4px; }
.status .third { margin-left: 18px; }
```
